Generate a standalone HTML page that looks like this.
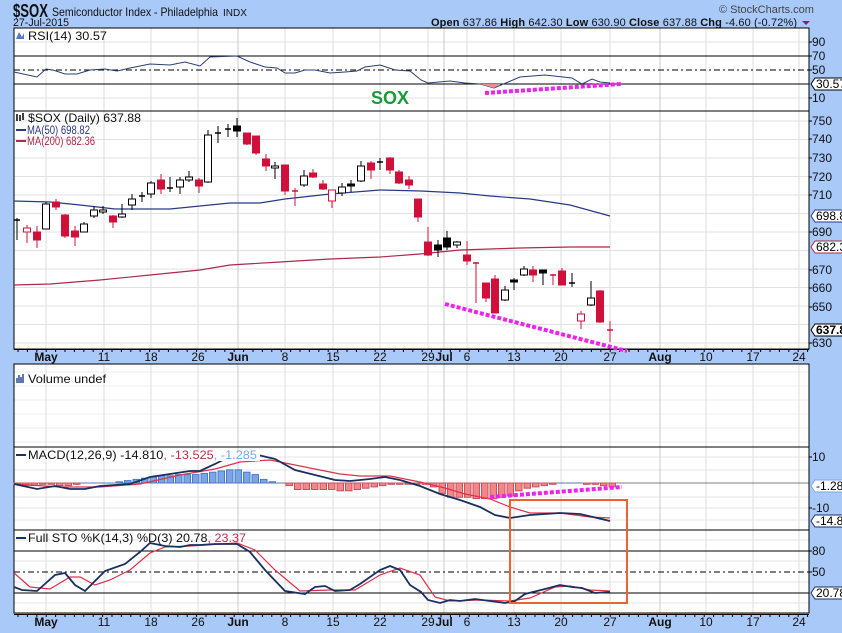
<!DOCTYPE html>
<html><head><meta charset="utf-8"><style>
html,body{margin:0;padding:0;background:#a9c9f9;width:842px;height:633px;overflow:hidden;font-family:"Liberation Sans",sans-serif}
svg{position:absolute;left:0;top:0}
</style></head><body>
<svg id="s" width="842" height="633" xmlns="http://www.w3.org/2000/svg" font-family="Liberation Sans, sans-serif">
<rect x="0" y="0" width="842" height="633" fill="#a9c9f9"/>
<text x="13" y="17" font-size="18" font-weight="bold" fill="#111" textLength="35" lengthAdjust="spacingAndGlyphs">$SOX</text>
<text x="52" y="16" font-size="12" fill="#111" textLength="166" lengthAdjust="spacingAndGlyphs">Semiconductor Index - Philadelphia</text>
<text x="223" y="16" font-size="10" fill="#111">INDX</text>
<text x="13" y="26" font-size="11" fill="#111" textLength="56" lengthAdjust="spacingAndGlyphs">27-Jul-2015</text>
<text x="719" y="13" font-size="11" fill="#444">© StockCharts.com</text>
<text x="431" y="26" font-size="11" fill="#111" textLength="366" lengthAdjust="spacing"><tspan font-weight="bold">Open</tspan> 637.86  <tspan font-weight="bold">High</tspan> 642.30  <tspan font-weight="bold">Low</tspan> 630.90  <tspan font-weight="bold">Close</tspan> 637.88  <tspan font-weight="bold">Chg</tspan> -4.60 (-0.72%)</text>
<polygon points="802,21 810,21 806,25" fill="#802080"/>
<g id="g"></g>
</svg>
<script>
var g=document.getElementById('g'),h='';
function R(x,y,w,hh,f,s){h+='<rect x="'+x+'" y="'+y+'" width="'+w+'" height="'+hh+'" fill="'+f+'"'+(s?' stroke="'+s+'"':'')+'/>';}
function L(x1,y1,x2,y2,c,w,d){h+='<line x1="'+x1+'" y1="'+y1+'" x2="'+x2+'" y2="'+y2+'" stroke="'+c+'" stroke-width="'+(w||1)+'"'+(d?' stroke-dasharray="'+d+'"':'')+'/>';}
function P(pts,c,w,d){h+='<polyline fill="none" points="'+pts+'" stroke="'+c+'" stroke-width="'+(w||1)+'"'+(d?' stroke-dasharray="'+d+'"':'')+'/>';}
function T(x,y,t,s,c,extra){h+='<text x="'+x+'" y="'+y+'" font-size="'+(s||11)+'" fill="'+(c||'#111')+'" '+(extra||'')+'>'+t+'</text>';}
function TL(x,y,t,len,c){T(x,y,t,12,c,'textLength="'+len+'" lengthAdjust="spacingAndGlyphs"');}
var X0=14,X1=809;
var panels=[[28,111],[111,349],[364,447],[447,530],[530,613]];
panels.forEach(function(p){R(X0,p[0],X1-X0,p[1]-p[0],'#fff');});
var dates=[46,104,151,198,238,285,333,380,428,444,467,514,561,610,660,706,753,799];
for(var y=121;y<349;y+=18.5)L(X0,y,X1,y,'#e2e2e2');
[42,98].forEach(function(y){L(X0,y,X1,y,'#e2e2e2')});
for(var y=372;y<447;y+=14)L(X0,y,X1,y,'#ececec');
[457,470,497,508,520].forEach(function(y){L(X0,y,X1,y,'#e6e6e6')});
[540,561,582,603].forEach(function(y){L(X0,y,X1,y,'#e6e6e6')});
panels.forEach(function(p){dates.forEach(function(x){L(x,p[0],x,p[1],(x==238||x==444||x==660)?'#c8c8c8':'#dedede')})});
L(X0,56,X1,56,'#000');L(X0,84,X1,84,'#000');L(X0,70,X1,70,'#000',1,'6,3,2,3');
L(X0,483,X1,483,'#000',0.5);
L(X0,551,X1,551,'#000');L(X0,593,X1,593,'#000');L(X0,572,X1,572,'#000',1,'6,3,2,3');
panels.forEach(function(p){h+='<rect x="'+X0+'" y="'+p[0]+'" width="'+(X1-X0)+'" height="'+(p[1]-p[0])+'" fill="none" stroke="#000" stroke-width="1"/>';});
function axis(y0){R(X0,y0,X1-X0,14,'#a9c9f9');L(X0,y0+0.5,X1,y0+0.5,'#000');
 for(var x=X0+4;x<X1;x+=9.4)L(x,y0,x,y0+3,'#000');
 var lab=[['May',46,1],['11',104],['18',151],['26',198],['Jun',238,1],['8',285],['15',333],['22',380],['29',428],['Jul',444,1],['6',467],['13',514],['20',561],['27',610],['Aug',660,1],['10',706],['17',753],['24',799]];
 lab.forEach(function(l){T(l[1],y0+12,l[0],12,'#111','text-anchor="middle"'+(l[2]?' font-weight="bold"':''));});}
axis(349);axis(614);
P('14,72 37,77 46,69 53,70 65,74 77,74 90,70 105,69 117,71 130,68 150,64 170,65 185,62 200,66 210,57 237,56 250,62 265,67 277,68 285,73 295,73 305,70 315,70 330,73 345,72 357,71 365,67 380,65 395,70 410,71 421,80 428,83 450,81 465,83 480,84 494,88 520,77 545,75 572,78 582,84 592,79 600,82 610,83','#2a4070');
h+='<polygon points="480,84 494,88 500,84" fill="#e89090"/>';
L(485,93,621,84,'#ee22ee',4,'4,2');
T(390,104,'SOX',18,'#1a9a3a','font-weight="bold" text-anchor="middle"');
TL(28,40,'RSI(14) 30.57',79);
h+='<path d="M16,39 L19,32 L22,37 L24,33 L24,39 Z" fill="#5577cc"/>';
P('14,201 50,202 80,205 115,209 170,209 230,203 260,203 285,199 330,194 380,190 421,191 460,193 490,196 530,199 570,205 610,216','#283a86',1.2);
P('14,285 50,284 100,280 150,275 200,270 230,265 280,262 330,259 380,257 420,254 460,250 520,248 570,247 610,247','#b0284a',1.2);
var C=[[17,220,222,218,240,'c'],[27,228,232,225,243,'q'],[37,232,240,226,248,'r'],[46,204,229,202,229,'h'],[56,202,207,199,210,'r'],[65,215,236,214,238,'r'],[75,231,237,226,246,'r'],[84,224,232,222,232,'h'],[94,210,216,206,218,'h'],[103,210,212,206,214,'h'],[113,216,222,215,228,'r'],[122,214,217,204,218,'h'],[132,199,205,194,210,'h'],[142,196,197,192,202,'c'],[151,183,194,181,198,'h'],[161,180,189,174,194,'r'],[170,188,189,177,192,'c'],[180,180,187,177,194,'h'],[189,177,180,171,182,'h'],[199,180,186,178,193,'r'],[208,135,182,130,183,'h'],[218,133,134,126,143,'c'],[228,129,130,124,137,'c'],[237,126,131,118,137,'b'],[247,133,144,133,145,'r'],[256,136,153,136,155,'r'],[266,159,166,154,171,'r'],[275,166,168,162,179,'h'],[285,165,191,165,195,'r'],[295,191,192,188,206,'x'],[304,176,185,170,187,'h'],[313,173,177,169,178,'r'],[323,184,189,180,190,'r'],[332,190,201,190,208,'q'],[342,187,193,183,196,'h'],[351,184,186,180,192,'b'],[361,166,181,161,182,'h'],[371,163,170,161,179,'r'],[380,162,163,158,170,'c'],[390,158,170,157,174,'r'],[399,172,183,170,184,'r'],[409,180,185,176,189,'r'],[418,199,217,199,222,'r'],[428,242,255,227,256,'r'],[438,245,250,240,257,'b'],[447,238,247,231,250,'b'],[457,242,245,241,248,'h'],[467,255,261,241,265,'r'],[476,263,264,262,303,'x'],[486,283,298,283,302,'r'],[495,279,313,275,313,'r'],[505,290,300,286,301,'h'],[514,280,282,278,290,'b'],[524,269,275,266,276,'h'],[533,270,275,266,282,'r'],[543,270,273,270,285,'b'],[553,275,276,274,285,'x'],[562,271,285,268,285,'r'],[572,283,284,273,287,'c'],[581,314,321,311,329,'q'],[591,298,305,281,306,'h'],[600,291,322,290,323,'r'],[610,330,331,321,342,'x']];
C.forEach(function(c){var x=c[0],t=c[5];var col=(t=='r'||t=='q'||t=='x')?'#d0103a':'#000';
 L(x,c[3],x,c[4],col);
 if(t=='c'||t=='x'){L(x-3,c[1],x+3,c[1],col,1.5);}
 else{var f=(t=='b'||t=='r')?col:'#fff';h+='<rect x="'+(x-3.5)+'" y="'+c[1]+'" width="7" height="'+Math.max(2,c[2]-c[1])+'" fill="'+f+'" stroke="'+col+'"/>';}});
L(445,304,627,351,'#ee22ee',4,'4,2');
TL(28,122,'$SOX (Daily) 637.88',113);
h+='<path d="M17,114 v7 M20,115 v6 M23,113 v7" stroke="#000" stroke-width="1.5"/>';
L(16,130,26,130,'#283a86',2);TL(27,134,'MA(50) 698.82',63,'#283a86');
L(16,141,26,141,'#b0284a',2);TL(27,145,'MA(200) 682.36',68,'#b0284a');
h+='<path d="M17,383 v-5 M19,383 v-8 M21,383 v-6 M23,383 v-9" stroke="#2a4a9a" stroke-width="1.5"/>';
TL(28,383,'Volume undef',78);
var hv=[-1,-2,-2,-1,-1,-2,-2,-1,0,0,0,0,1,2,3,4,5,6,6,7,7,7,8,9,10,11,11,9,7,3,1,0,-2,-5,-5,-5,-5,-5,-6,-6,-5,-4,-3,-2,-1,-1,-1,-1,-1,-3,-8,-11,-11,-11,-12,-12,-12,-11,-10,-6,-4,-3,-2,-1,0,0,0,-1,-1,-2,-3];
for(var i=0;i<hv.length;i++){var x=14+i*8.5,v=hv[i];if(x>612)break;
 if(v>0)R(x,483-v*1.2,6.5,v*1.2,'#7aa6e8','#4a78c8');else if(v<0)R(x,483,6.5,-v*1.3,'#f08888','#c85060');else L(x,483,x+6,483,'#4a78c8');}
P('14,484 60,487 100,487 140,484 180,475 215,469 240,462 270,460 300,466 340,474 360,476 390,476 420,482 445,488 465,494 490,499 510,507 530,513 560,513 590,517 610,518','#e0304a',1.2);
P('14,484 37,489 55,486 70,489 85,489 100,486 130,484 150,477 170,474 190,471 200,471 215,464 225,459 240,454 258,455 275,459 295,470 315,475 335,480 350,481 370,479 385,477 400,480 420,486 440,494 460,500 480,507 495,515 510,518 530,515 560,513 580,514 610,521','#1a3060',1.8);
L(490,497,622,487,'#ee22ee',4,'4,2');
R(15,451,245,10,'#fff');
L(16,455,26,455,'#1a3060',2);
T(28,459,'MACD(12,26,9) -14.810<tspan fill="#c0304a">, -13.525</tspan><tspan fill="#7aa6e8">, -1.285</tspan>',12,'#111','textLength="229" lengthAdjust="spacingAndGlyphs"');
P('14,573 30,587 50,589 70,577 80,577 95,585 110,580 130,570 150,553 165,547 190,546 237,543 255,550 275,570 300,591 330,590 355,590 380,575 400,568 420,575 435,597 450,601 480,600 510,601 530,598 555,587 570,586 590,590 610,591','#e0304a',1.2);
P('14,587 22,590 37,591 55,575 65,573 75,585 85,591 105,571 125,564 140,552 150,543 165,546 180,547 190,545 200,545 215,544 237,544 250,552 265,570 285,591 305,594 315,587 325,586 335,591 350,590 360,584 380,570 390,566 400,570 410,585 421,592 428,600 440,603 450,600 460,601 475,599 490,601 505,603 515,601 525,594 545,589 560,585 572,587 582,588 595,593 610,592','#1a3060',1.8);
L(16,538,26,538,'#1a3060',2);
T(28,542,'Full STO %K(14,3) %D(3) 20.78<tspan fill="#c0304a">, 23.37</tspan>',12,'#111','textLength="218" lengthAdjust="spacingAndGlyphs"');
h+='<rect x="510" y="500" width="117" height="103" fill="none" stroke="#f06030" stroke-width="2"/>';
function RL(y,t){L(X1,y,X1+3,y,'#000');T(X1+3,y+4,t,12);}
function BX(y,t,c,b){h+='<path d="M'+(X1+2)+','+y+' l4,-6 h36 v12 h-36 z" fill="#fff" stroke="'+c+'"/>';T(X1+7,y+4,t,12,'#000',b?'font-weight="bold"':'');}
[[42,'90'],[56,'70'],[70,'50'],[98,'10']].forEach(function(a){RL(a[0],a[1])});BX(84,'30.57','#000');
[[121,'750'],[139,'740'],[158,'730'],[177,'720'],[195,'710'],[232,'690'],[270,'670'],[288,'660'],[307,'650'],[343,'630']].forEach(function(a){RL(a[0],a[1])});
BX(216,'698.82','#283a86');BX(247,'682.36','#b0284a');BX(330,'637.88','#000',1);
RL(457,'10');RL(508,'-10');BX(486,'-1.285','#7aa6e8');BX(521,'-14.81','#1a3060');
RL(551,'80');RL(572,'50');BX(593,'20.78','#1a3060');
g.innerHTML=h;
</script>
</body></html>
